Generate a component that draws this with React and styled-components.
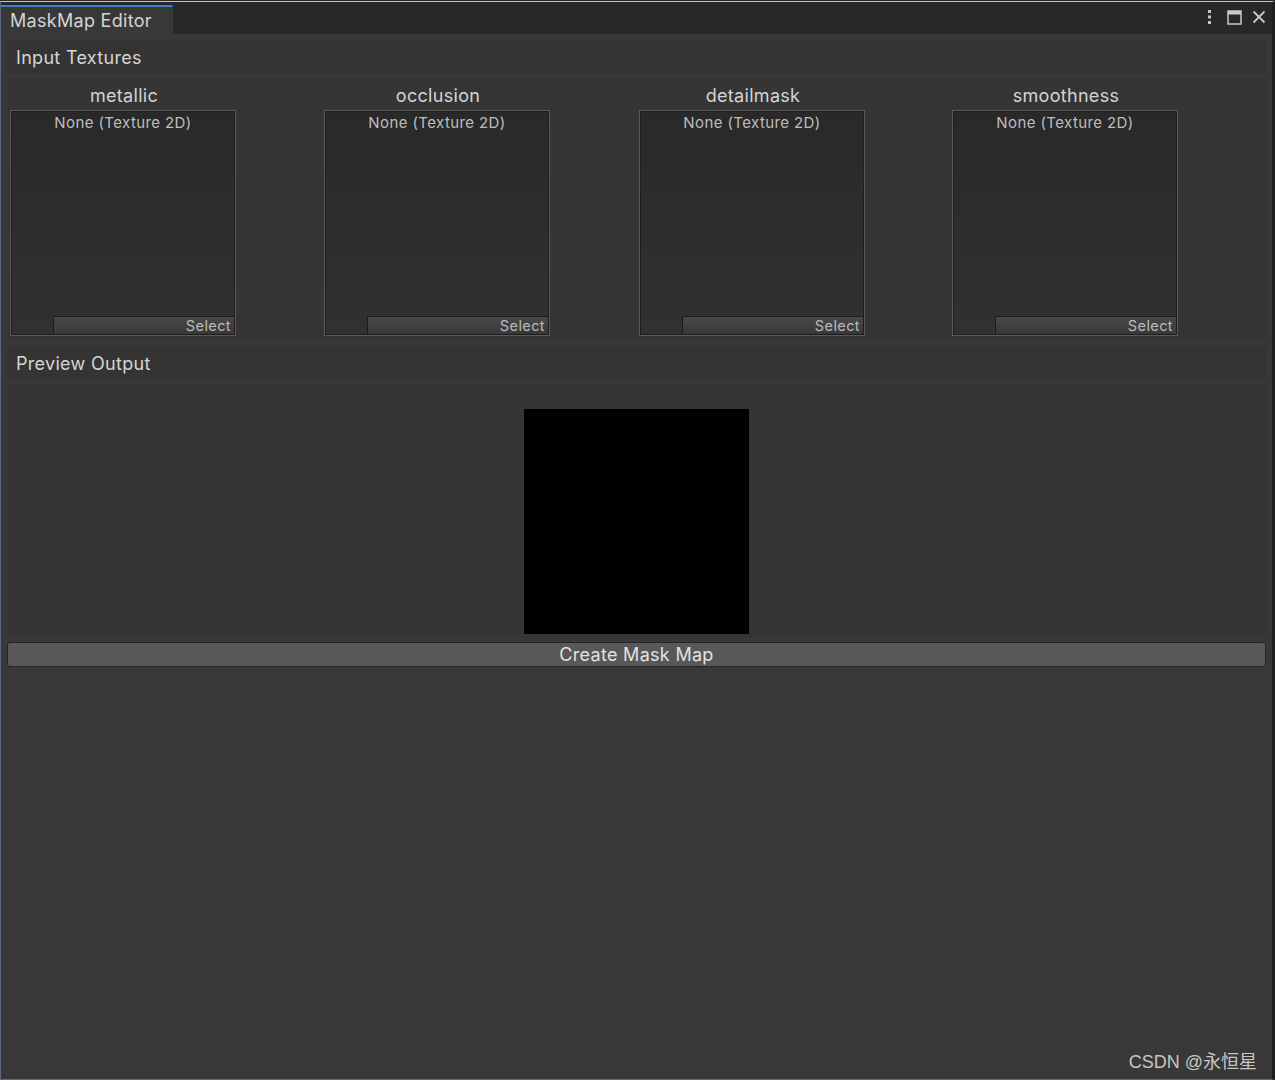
import React from "react";
import styled, { createGlobalStyle } from "styled-components";

const GlobalStyle = createGlobalStyle`
  html, body {
    margin: 0;
    padding: 0;
    background: #2a2a2a;
  }
  body {
    font-family: Inter, "Noto Sans", "Noto Sans CJK SC", sans-serif;
  }
  * {
    box-sizing: border-box;
  }
`;

const Window = styled.div`
  position: relative;
  width: 1275px;
  height: 1080px;
  margin-top: 1px;
  border-top: 1px solid #c4c4c4;
  border-left: 1px solid #5d6a7c;
  border-right: 3px solid #1f1f1f;
  border-bottom: 2px solid #6a6a6a;
  background: #383838;
  display: flex;
  flex-direction: column;
  overflow: hidden;
`;

const TabBar = styled.div`
  height: 32px;
  background: #282828;
  display: flex;
  align-items: flex-end;
  justify-content: space-between;
  flex-shrink: 0;
`;

const Tab = styled.div`
  width: 172px;
  height: 29px;
  background: #383838;
  border-top: 2px solid #3e7fcc;
  border-top-right-radius: 2px;
  color: #d4d4d4;
  font-size: 18px;
  letter-spacing: 0.3px;
  padding-left: 9px;
  display: flex;
  align-items: center;
`;

const WindowControls = styled.div`
  align-self: stretch;
  display: flex;
  align-items: center;
  padding-right: 6px;
  padding-bottom: 2px;
`;

const ControlIcon = styled.span`
  display: flex;
  margin-left: ${(p) => p.$gap || 0}px;
`;

const Content = styled.div`
  padding: 6px 6px 0 6px;
  display: flex;
  flex-direction: column;
  gap: 6px;
`;

const SectionHeader = styled.div`
  height: 34px;
  background: #343434;
  color: #d4d4d4;
  font-size: 18px;
  letter-spacing: 0.3px;
  padding-left: 9px;
  display: flex;
  align-items: center;
`;

const SectionBody = styled.div`
  margin-top: -2px;
  background: #353535;
  padding: ${(p) => p.$pad || "0"};
  display: ${(p) => (p.$center ? "flex" : "block")};
  justify-content: center;
`;

const FieldGrid = styled.div`
  display: grid;
  grid-template-columns: 314px 315px 313px 314px;
  padding: 6px 0 4px 3px;
`;

const Field = styled.div`
  display: flex;
  flex-direction: column;
`;

const FieldLabel = styled.div`
  width: 228px;
  text-align: center;
  color: #d4d4d4;
  font-size: 18px;
  line-height: 24px;
  letter-spacing: 0.3px;
`;

const TextureBox = styled.div`
  position: relative;
  margin-top: 2px;
  width: 226px;
  height: 226px;
  border: 1px solid #5a5a5a;
  background: linear-gradient(#292929, #313131);
  box-shadow: inset 0 0 0 1px #1e1e1e;
  color: #bdbdbd;
  font-size: 15px;
  letter-spacing: 0.4px;
  text-align: center;
  padding-top: 2px;
`;

const SelectButton = styled.div`
  position: absolute;
  left: 42px;
  right: 1px;
  bottom: 1px;
  height: 18px;
  border-top: 1px solid #1c1c1c;
  border-left: 1px solid #1c1c1c;
  background: linear-gradient(#484848, #383838);
  color: #bcbcbc;
  font-size: 14.5px;
  line-height: 17px;
  text-align: right;
  padding-right: 3px;
`;

const PreviewImage = styled.div`
  width: 225px;
  height: 225px;
  background: #000;
`;

const CreateButton = styled.button`
  margin-top: -2px;
  height: 25px;
  border: 1px solid #262626;
  border-radius: 3px;
  background: #585858;
  color: #e2e2e2;
  font-family: Inter, "Noto Sans", sans-serif;
  font-size: 18px;
  letter-spacing: 0.3px;
  padding: 0;
  cursor: pointer;
`;

const Watermark = styled.div`
  position: absolute;
  right: 15px;
  bottom: 6px;
  color: #c6c6c6;
  font-family: "Liberation Sans", "Noto Sans CJK SC", sans-serif;
  font-size: 18px;
`;

const textures = ["metallic", "occlusion", "detailmask", "smoothness"];

function KebabIcon() {
  return (
    <svg width="6" height="16" viewBox="0 0 6 16">
      <rect x="1" y="1" width="3" height="3" fill="#c8c8c8" />
      <rect x="1" y="6.5" width="3" height="3" fill="#c8c8c8" />
      <rect x="1" y="12" width="3" height="3" fill="#c8c8c8" />
    </svg>
  );
}

function MaximizeIcon() {
  return (
    <svg width="15" height="15" viewBox="0 0 15 15">
      <rect x="1" y="1" width="13" height="13" fill="none" stroke="#c8c8c8" strokeWidth="1.5" />
      <rect x="1" y="1" width="13" height="3.5" fill="#c8c8c8" />
    </svg>
  );
}

function CloseIcon() {
  return (
    <svg width="14" height="14" viewBox="0 0 14 14">
      <path d="M1.5 1.5 L12.5 12.5 M12.5 1.5 L1.5 12.5" stroke="#c8c8c8" strokeWidth="1.8" />
    </svg>
  );
}

export default function App() {
  return (
    <>
      <GlobalStyle />
      <Window>
        <TabBar>
          <Tab>MaskMap Editor</Tab>
          <WindowControls>
            <ControlIcon>
              <KebabIcon />
            </ControlIcon>
            <ControlIcon $gap={14}>
              <MaximizeIcon />
            </ControlIcon>
            <ControlIcon $gap={10}>
              <CloseIcon />
            </ControlIcon>
          </WindowControls>
        </TabBar>
        <Content>
          <SectionHeader>Input Textures</SectionHeader>
          <SectionBody>
            <FieldGrid>
              {textures.map((name) => (
                <Field key={name}>
                  <FieldLabel>{name}</FieldLabel>
                  <TextureBox>
                    None (Texture 2D)
                    <SelectButton>Select</SelectButton>
                  </TextureBox>
                </Field>
              ))}
            </FieldGrid>
          </SectionBody>
          <SectionHeader>Preview Output</SectionHeader>
          <SectionBody $pad="25px 0 4px 0" $center>
            <PreviewImage />
          </SectionBody>
          <CreateButton>Create Mask Map</CreateButton>
        </Content>
        <Watermark>CSDN @永恒星</Watermark>
      </Window>
    </>
  );
}
